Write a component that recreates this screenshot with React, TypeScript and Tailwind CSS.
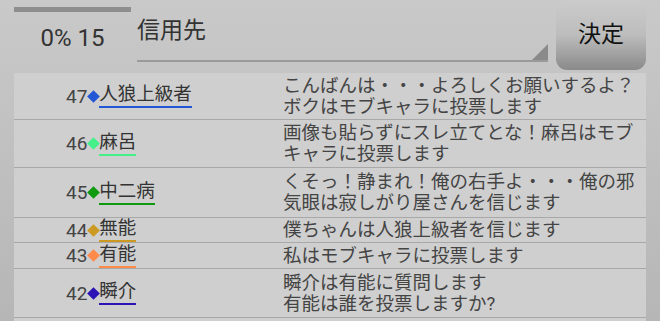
import React from 'react'

type Post = {
  no: number
  name: string
  color: string
  height: number
  lines: string[]
}

const posts: Post[] = [
  { no: 47, name: '人狼上級者', color: '#2457d6', height: 47, lines: ['こんばんは・・・よろしくお願いするよ？', 'ボクはモブキャラに投票します'] },
  { no: 46, name: '麻呂', color: '#45f08a', height: 48, lines: ['画像も貼らずにスレ立てとな！麻呂はモブ', 'キャラに投票します'] },
  { no: 45, name: '中二病', color: '#0f9a0f', height: 50, lines: ['くそっ！静まれ！俺の右手よ・・・俺の邪', '気眼は寂しがり屋さんを信じます'] },
  { no: 44, name: '無能', color: '#cc9a22', height: 25, lines: ['僕ちゃんは人狼上級者を信じます'] },
  { no: 43, name: '有能', color: '#ff8a4a', height: 26, lines: ['私はモブキャラに投票します'] },
  { no: 42, name: '瞬介', color: '#2a14b4', height: 49, lines: ['瞬介は有能に質問します', '有能は誰を投票しますか?'] },
]

const font = { fontFamily: 'Roboto, "Noto Sans CJK JP", sans-serif' }

function PostRow({ post }: { post: Post }) {
  return (
    <div className="flex border-b border-[#a8a8a8]" style={{ height: post.height }}>
      {/* speaker */}
      <div className="flex w-[266px] shrink-0 items-center pl-[52px] text-[19px] leading-[20px] text-[#444]">
        <span className="pt-[1px]">{post.no}</span>
        <span
          className="ml-[2px] mr-[1px] inline-block h-[9px] w-[9px] rotate-45"
          style={{ backgroundColor: post.color }}
        />
        <span
          className="border-b-2 pb-[2px] text-[18.5px] leading-[20px] text-[#333]"
          style={{ borderColor: post.color }}
        >
          {post.name}
        </span>
      </div>

      {/* message */}
      <div className="flex flex-1 flex-col justify-center pl-[3px] pt-[1px] text-[18.5px] leading-[21px] text-[#444]">
        {post.lines.map((line, i) => (
          <div key={i} className="whitespace-nowrap">
            {line}
          </div>
        ))}
      </div>
    </div>
  )
}

export default function App() {
  return (
    <div
      className="h-[321px] w-[660px] overflow-hidden bg-gradient-to-b from-[#c9c9c9] to-[#b6b6b6]"
      style={font}
    >
      {/* header */}
      <div className="flex h-[73px]">
        <div className="ml-[14px] flex w-[117px] flex-col items-center pt-[7px]">
          <div className="h-[5px] w-full bg-[#8e8e8e]" />
          <div className="mt-[11px] text-[24px] leading-[30px] text-[#333]">0% 15</div>
        </div>

        <div className="relative ml-[6px] h-[62px] w-[411px] border-b-2 border-[#9a9a9a]">
          <div className="pt-[16px] text-[23px] leading-[30px] text-[#333]">信用先</div>
          <div className="absolute bottom-0 right-0 h-0 w-0 border-b-[16px] border-l-[16px] border-b-[#8a8a8a] border-l-transparent" />
        </div>

        <button className="ml-[8px] flex h-[70px] w-[90px] items-center justify-center rounded-[11px] bg-gradient-to-b from-[#cbcbcb] via-[#bdbdbd] to-[#8a8a8a] text-[23px] text-[#111]">
          決定
        </button>
      </div>

      {/* thread */}
      <div className="mx-[14px] bg-[#cfcfcf]">
        {posts.map(p => (
          <PostRow key={p.no} post={p} />
        ))}
        <div className="h-[20px]" />
      </div>
    </div>
  )
}
